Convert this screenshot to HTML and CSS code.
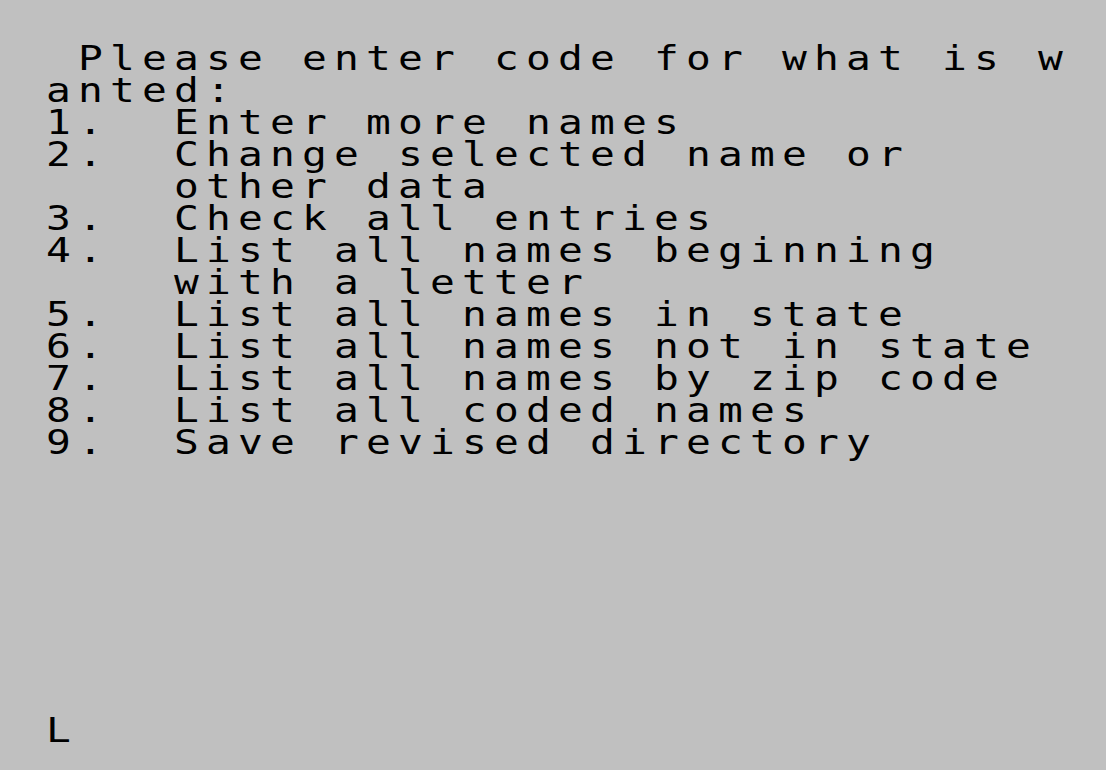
FILE: index.html
```html
<!DOCTYPE html>
<html>
<head>
<meta charset="utf-8">
<link rel="stylesheet" href="styles.css">
</head>
<body>
<div class="screen">
  <div class="line"> Please enter code for what is w</div>
  <div class="line">anted:</div>
  <div class="line">1.  Enter more names</div>
  <div class="line">2.  Change selected name or</div>
  <div class="line">    other data</div>
  <div class="line">3.  Check all entries</div>
  <div class="line">4.  List all names beginning</div>
  <div class="line">    with a letter</div>
  <div class="line">5.  List all names in state</div>
  <div class="line">6.  List all names not in state</div>
  <div class="line">7.  List all names by zip code</div>
  <div class="line">8.  List all coded names</div>
  <div class="line">9.  Save revised directory</div>
  <div class="line cursor">L</div>
</div>
</body>
</html>
```

FILE: styles.css
```css
html, body {
  margin: 0;
  padding: 0;
  background: #c0c0c0;
  width: 1106px;
  height: 770px;
  overflow: hidden;
}

.screen {
  display: grid;
  grid-auto-rows: 32px;
  justify-items: start;
  padding: 43px 0 0 46px;
  width: 1024px;
}

.line {
  width: 819px;
  overflow: visible;
  font-family: "DejaVu Sans Mono", "Liberation Mono", monospace;
  font-size: 33px;
  line-height: 32px;
  letter-spacing: 5.73px;
  white-space: pre;
  color: #000;
  transform: scaleX(1.25);
  transform-origin: left center;
}

.cursor {
  grid-row: 22;
}
```
